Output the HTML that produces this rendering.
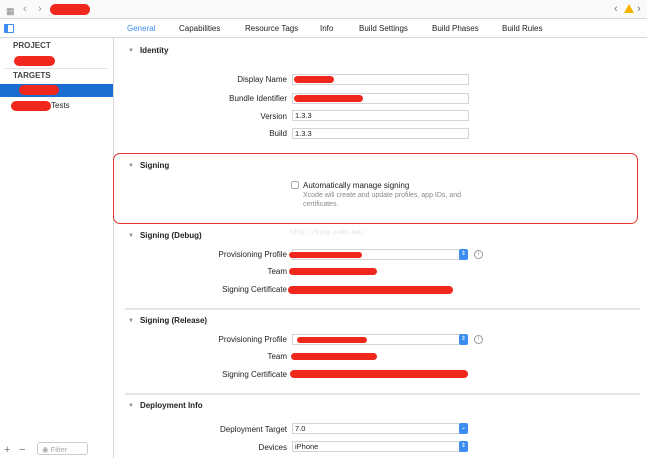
<!DOCTYPE html>
<html><head><meta charset="utf-8"><style>
*{margin:0;padding:0;box-sizing:border-box}
body{width:647px;height:458px;overflow:hidden;background:#fff;font-family:"Liberation Sans",sans-serif;font-size:8px;color:#222;position:relative}
.a{position:absolute}
.red{position:absolute;background:#f0271c;border-radius:6px}
.lbl{position:absolute;right:360px;text-align:right;font-size:8px;white-space:nowrap}
.fld{position:absolute;left:292px;width:177px;height:11px;border:1px solid #d4d4d4;background:#fff;font-size:7.5px;padding-left:2px;line-height:9px}
.hd{position:absolute;left:128px;font-weight:bold;font-size:8px}
.hd:before{content:"▼";font-size:6px;color:#888;margin-right:6px;position:relative;top:-1px}
.div{position:absolute;left:125px;width:515px;height:2px;background:#e6e6e6}
.step{position:absolute;width:9px;height:11px;background:#3b8df1;border-radius:2px;color:#fff;font-size:6px;text-align:center;line-height:11px}
.info{position:absolute;width:9px;height:9px;border:1px solid #999;border-radius:50%;font-size:6px;color:#999;text-align:center;line-height:7px}
</style></head><body>
<!-- top bar -->
<div class="a" style="left:0;top:0;width:647px;height:19px;background:#fafafa;border-bottom:1px solid #d8d8d8"></div>
<div class="a" style="left:6px;top:6px;font-size:9px;color:#888">▦</div>
<div class="a" style="left:23px;top:3px;font-size:11px;color:#999">‹</div>
<div class="a" style="left:38px;top:3px;font-size:11px;color:#999">›</div>
<div class="red" style="left:50px;top:4px;width:40px;height:11px"></div>
<div class="a" style="left:614px;top:3px;font-size:11px;color:#777">‹</div>
<div class="a" style="left:624px;top:4px;width:0;height:0;border-left:5px solid transparent;border-right:5px solid transparent;border-bottom:9px solid #f5b400"></div>
<div class="a" style="left:637px;top:3px;font-size:11px;color:#777">›</div>
<!-- tab bar -->
<div class="a" style="left:0;top:19px;width:647px;height:19px;border-bottom:1px solid #d8d8d8;background:#fff"></div>
<div class="a" style="left:4px;top:24px;width:10px;height:9px;border:1px solid #3b8df1;border-radius:1px"><div style="width:3px;height:7px;background:#3b8df1"></div></div>
<div class="a" style="left:127px;top:24px;color:#3b8df1">General</div>
<div class="a" style="left:179px;top:24px">Capabilities</div>
<div class="a" style="left:245px;top:24px">Resource Tags</div>
<div class="a" style="left:320px;top:24px">Info</div>
<div class="a" style="left:359px;top:24px">Build Settings</div>
<div class="a" style="left:432px;top:24px">Build Phases</div>
<div class="a" style="left:502px;top:24px">Build Rules</div>
<!-- sidebar -->
<div class="a" style="left:113px;top:38px;width:1px;height:420px;background:#d8d8d8"></div>
<div class="a" style="left:13px;top:41px;font-weight:bold;color:#444">PROJECT</div>
<div class="red" style="left:14px;top:56px;width:41px;height:10px"></div>
<div class="a" style="left:5px;top:68px;width:103px;height:1px;background:#e2e2e2"></div>
<div class="a" style="left:13px;top:71px;font-weight:bold;color:#444">TARGETS</div>
<div class="a" style="left:0;top:84px;width:113px;height:13px;background:#1a6dd1"></div>
<div class="red" style="left:19px;top:85px;width:40px;height:10px"></div>
<div class="red" style="left:11px;top:101px;width:40px;height:10px"></div>
<div class="a" style="left:51px;top:101px">Tests</div>
<div class="a" style="left:4px;top:444px;font-size:11px;color:#777">+</div>
<div class="a" style="left:19px;top:444px;font-size:11px;color:#777">−</div>
<div class="a" style="left:37px;top:442px;width:51px;height:13px;border:1px solid #ccc;border-radius:3px;color:#aaa;font-size:7.5px;padding:2px 0 0 4px">◉ Filter</div>
<!-- Identity -->
<div class="hd" style="top:46px">Identity</div>
<div class="lbl" style="top:75px">Display Name</div>
<div class="fld" style="top:74px"></div><div class="red" style="left:294px;top:76px;width:40px;height:7px"></div>
<div class="lbl" style="top:94px">Bundle Identifier</div>
<div class="fld" style="top:93px"></div><div class="red" style="left:294px;top:95px;width:69px;height:7px"></div>
<div class="lbl" style="top:112px">Version</div>
<div class="fld" style="top:110px">1.3.3</div>
<div class="lbl" style="top:129px">Build</div>
<div class="fld" style="top:128px">1.3.3</div>
<!-- Signing box -->
<div class="a" style="left:113px;top:153px;width:525px;height:71px;border:1.5px solid #e8342b;border-radius:7px"></div>
<div class="hd" style="top:161px">Signing</div>
<div class="a" style="left:291px;top:181px;width:8px;height:8px;border:1px solid #aaa;border-radius:2px"></div>
<div class="a" style="left:303px;top:181px">Automatically manage signing</div>
<div class="a" style="left:303px;top:192px;color:#888;font-size:7px;line-height:8.5px">Xcode will create and update profiles, app IDs, and<br>certificates.</div>
<!-- Debug -->
<div class="hd" style="top:231px">Signing (Debug)</div>
<div class="a" style="left:290px;top:229px;font-size:6px;color:#ddd;font-family:'Liberation Mono',monospace">http://blog.csdn.net/</div>
<div class="lbl" style="top:250px">Provisioning Profile</div>
<div class="fld" style="top:249px;width:168px"></div><div class="step" style="left:459px;top:249px">⇕</div>
<div class="red" style="left:289px;top:252px;width:73px;height:6px"></div>
<div class="info" style="left:474px;top:250px">i</div>
<div class="lbl" style="top:267px">Team</div>
<div class="red" style="left:289px;top:268px;width:88px;height:7px"></div>
<div class="lbl" style="top:285px">Signing Certificate</div>
<div class="red" style="left:288px;top:286px;width:165px;height:8px"></div>
<!-- Release -->
<div class="div" style="top:308px"></div>
<div class="hd" style="top:316px">Signing (Release)</div>
<div class="lbl" style="top:335px">Provisioning Profile</div>
<div class="fld" style="top:334px;width:168px"></div><div class="step" style="left:459px;top:334px">⇕</div>
<div class="red" style="left:297px;top:337px;width:70px;height:6px"></div>
<div class="info" style="left:474px;top:335px">i</div>
<div class="lbl" style="top:352px">Team</div>
<div class="red" style="left:291px;top:353px;width:86px;height:7px"></div>
<div class="lbl" style="top:370px">Signing Certificate</div>
<div class="red" style="left:290px;top:370px;width:178px;height:8px"></div>
<!-- Deployment -->
<div class="div" style="top:393px"></div>
<div class="hd" style="top:401px">Deployment Info</div>
<div class="lbl" style="top:425px">Deployment Target</div>
<div class="fld" style="top:423px;width:168px">7.0</div><div class="step" style="left:459px;top:423px">⌄</div>
<div class="lbl" style="top:443px">Devices</div>
<div class="fld" style="top:441px;width:168px">iPhone</div><div class="step" style="left:459px;top:441px">⇕</div>
</body></html>
